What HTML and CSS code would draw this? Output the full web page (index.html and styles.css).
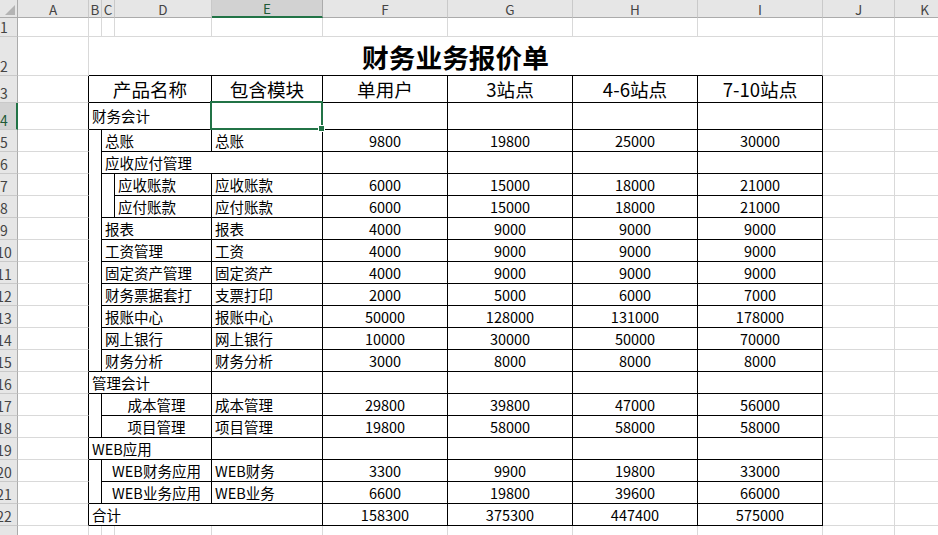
FILE: index.html
```html
<!DOCTYPE html>
<html lang="zh-CN">
<head>
<meta charset="utf-8">
<title>财务业务报价单</title>
<link rel="stylesheet" href="styles.css">
</head>
<body>
<div class="sheet">
  <!-- column headers -->
  <div class="corner"><span class="tri"></span></div>
  <div class="ch">A</div><div class="ch">B</div><div class="ch">C</div><div class="ch">D</div>
  <div class="ch csel">E</div><div class="ch">F</div><div class="ch">G</div><div class="ch">H</div>
  <div class="ch">I</div><div class="ch">J</div><div class="ch">K</div>

  <!-- row 1 -->
  <div class="rh"><span>1</span></div>
  <div class="c"></div><div class="c"></div><div class="c"></div><div class="c"></div><div class="c"></div>
  <div class="c"></div><div class="c"></div><div class="c"></div><div class="c"></div><div class="c"></div><div class="c"></div>

  <!-- row 2 -->
  <div class="rh"><span>2</span></div>
  <div class="c"></div>
  <div class="c s8 title">财务业务报价单</div>
  <div class="c"></div><div class="c"></div>

  <!-- row 3 -->
  <div class="rh"><span>3</span></div>
  <div class="c ar"></div>
  <div class="c bk s3 hd">产品名称</div>
  <div class="c bk hd">包含模块</div>
  <div class="c bk hd">单用户</div>
  <div class="c bk hd">3站点</div>
  <div class="c bk hd">4-6站点</div>
  <div class="c bk hd">7-10站点</div>
  <div class="c"></div><div class="c"></div>

  <!-- row 4 -->
  <div class="rh rsel"><span>4</span></div>
  <div class="c ar"></div>
  <div class="c bk s3 tx">财务会计</div>
  <div class="c bk sel"><span class="selbox"><span class="handle"></span></span></div>
  <div class="c bk"></div><div class="c bk"></div><div class="c bk"></div><div class="c bk"></div>
  <div class="c"></div><div class="c"></div>

  <!-- row 5 -->
  <div class="rh"><span>5</span></div>
  <div class="c ar"></div>
  <div class="c bk r11"></div>
  <div class="c bk s2 tx">总账</div>
  <div class="c bk tx">总账</div>
  <div class="c bk n">9800</div><div class="c bk n">19800</div><div class="c bk n">25000</div><div class="c bk n">30000</div>
  <div class="c"></div><div class="c"></div>

  <!-- row 6 -->
  <div class="rh"><span>6</span></div>
  <div class="c ar"></div>
  <div class="c bk s3 tx">应收应付管理</div>
  <div class="c bk"></div><div class="c bk"></div><div class="c bk"></div><div class="c bk"></div>
  <div class="c"></div><div class="c"></div>

  <!-- row 7 -->
  <div class="rh"><span>7</span></div>
  <div class="c ar"></div>
  <div class="c bk r2"></div>
  <div class="c bk tx">应收账款</div>
  <div class="c bk tx">应收账款</div>
  <div class="c bk n">6000</div><div class="c bk n">15000</div><div class="c bk n">18000</div><div class="c bk n">21000</div>
  <div class="c"></div><div class="c"></div>

  <!-- row 8 -->
  <div class="rh"><span>8</span></div>
  <div class="c ar"></div>
  <div class="c bk tx">应付账款</div>
  <div class="c bk tx">应付账款</div>
  <div class="c bk n">6000</div><div class="c bk n">15000</div><div class="c bk n">18000</div><div class="c bk n">21000</div>
  <div class="c"></div><div class="c"></div>

  <!-- row 9 -->
  <div class="rh"><span>9</span></div>
  <div class="c ar"></div>
  <div class="c bk s2 tx">报表</div>
  <div class="c bk tx">报表</div>
  <div class="c bk n">4000</div><div class="c bk n">9000</div><div class="c bk n">9000</div><div class="c bk n">9000</div>
  <div class="c"></div><div class="c"></div>

  <!-- row 10 -->
  <div class="rh"><span>10</span></div>
  <div class="c ar"></div>
  <div class="c bk s2 tx">工资管理</div>
  <div class="c bk tx">工资</div>
  <div class="c bk n">4000</div><div class="c bk n">9000</div><div class="c bk n">9000</div><div class="c bk n">9000</div>
  <div class="c"></div><div class="c"></div>

  <!-- row 11 -->
  <div class="rh"><span>11</span></div>
  <div class="c ar"></div>
  <div class="c bk s2 tx">固定资产管理</div>
  <div class="c bk tx">固定资产</div>
  <div class="c bk n">4000</div><div class="c bk n">9000</div><div class="c bk n">9000</div><div class="c bk n">9000</div>
  <div class="c"></div><div class="c"></div>

  <!-- row 12 -->
  <div class="rh"><span>12</span></div>
  <div class="c ar"></div>
  <div class="c bk s2 tx">财务票据套打</div>
  <div class="c bk tx">支票打印</div>
  <div class="c bk n">2000</div><div class="c bk n">5000</div><div class="c bk n">6000</div><div class="c bk n">7000</div>
  <div class="c"></div><div class="c"></div>

  <!-- row 13 -->
  <div class="rh"><span>13</span></div>
  <div class="c ar"></div>
  <div class="c bk s2 tx">报账中心</div>
  <div class="c bk tx">报账中心</div>
  <div class="c bk n">50000</div><div class="c bk n">128000</div><div class="c bk n">131000</div><div class="c bk n">178000</div>
  <div class="c"></div><div class="c"></div>

  <!-- row 14 -->
  <div class="rh"><span>14</span></div>
  <div class="c ar"></div>
  <div class="c bk s2 tx">网上银行</div>
  <div class="c bk tx">网上银行</div>
  <div class="c bk n">10000</div><div class="c bk n">30000</div><div class="c bk n">50000</div><div class="c bk n">70000</div>
  <div class="c"></div><div class="c"></div>

  <!-- row 15 -->
  <div class="rh"><span>15</span></div>
  <div class="c ar"></div>
  <div class="c bk s2 tx">财务分析</div>
  <div class="c bk tx">财务分析</div>
  <div class="c bk n">3000</div><div class="c bk n">8000</div><div class="c bk n">8000</div><div class="c bk n">8000</div>
  <div class="c"></div><div class="c"></div>

  <!-- row 16 -->
  <div class="rh"><span>16</span></div>
  <div class="c ar"></div>
  <div class="c bk s3 tx">管理会计</div>
  <div class="c bk"></div>
  <div class="c bk"></div><div class="c bk"></div><div class="c bk"></div><div class="c bk"></div>
  <div class="c"></div><div class="c"></div>

  <!-- row 17 -->
  <div class="rh"><span>17</span></div>
  <div class="c ar"></div>
  <div class="c bk r2"></div>
  <div class="c bk s2 ctr">成本管理</div>
  <div class="c bk tx">成本管理</div>
  <div class="c bk n">29800</div><div class="c bk n">39800</div><div class="c bk n">47000</div><div class="c bk n">56000</div>
  <div class="c"></div><div class="c"></div>

  <!-- row 18 -->
  <div class="rh"><span>18</span></div>
  <div class="c ar"></div>
  <div class="c bk s2 ctr">项目管理</div>
  <div class="c bk tx">项目管理</div>
  <div class="c bk n">19800</div><div class="c bk n">58000</div><div class="c bk n">58000</div><div class="c bk n">58000</div>
  <div class="c"></div><div class="c"></div>

  <!-- row 19 -->
  <div class="rh"><span>19</span></div>
  <div class="c ar"></div>
  <div class="c bk s3 tx">WEB应用</div>
  <div class="c bk"></div>
  <div class="c bk"></div><div class="c bk"></div><div class="c bk"></div><div class="c bk"></div>
  <div class="c"></div><div class="c"></div>

  <!-- row 20 -->
  <div class="rh"><span>20</span></div>
  <div class="c ar"></div>
  <div class="c bk r2"></div>
  <div class="c bk s2 ctr">WEB财务应用</div>
  <div class="c bk tx">WEB财务</div>
  <div class="c bk n">3300</div><div class="c bk n">9900</div><div class="c bk n">19800</div><div class="c bk n">33000</div>
  <div class="c"></div><div class="c"></div>

  <!-- row 21 -->
  <div class="rh"><span>21</span></div>
  <div class="c ar"></div>
  <div class="c bk s2 ctr">WEB业务应用</div>
  <div class="c bk tx">WEB业务</div>
  <div class="c bk n">6600</div><div class="c bk n">19800</div><div class="c bk n">39600</div><div class="c bk n">66000</div>
  <div class="c"></div><div class="c"></div>

  <!-- row 22 -->
  <div class="rh"><span>22</span></div>
  <div class="c ar"></div>
  <div class="c bk s4 tx">合计</div>
  <div class="c bk n">158300</div><div class="c bk n">375300</div><div class="c bk n">447400</div><div class="c bk n">575000</div>
  <div class="c"></div><div class="c"></div>

  <!-- row 23 -->
  <div class="rh"><span>23</span></div>
  <div class="c"></div><div class="c"></div><div class="c"></div><div class="c"></div><div class="c"></div>
  <div class="c"></div><div class="c"></div><div class="c"></div><div class="c"></div><div class="c"></div><div class="c"></div>
</div>
</body>
</html>
```

FILE: styles.css
```css
html, body {
  margin: 0;
  padding: 0;
  background: #ffffff;
  overflow: hidden;
}

.sheet {
  display: grid;
  grid-template-columns: 18px 71px 13px 13px 97px 111px 125px 125px 125px 125px 72px 60px;
  grid-template-rows: 18px 19px 39px 27px 27px repeat(18, 22px) 30px;
  width: 955px;
  font-family: "Noto Sans CJK SC", "Noto Sans", sans-serif;
  font-size: 14.5px;
  color: #000;
}

.sheet > div {
  box-sizing: border-box;
  min-width: 0;
  overflow: hidden;
}

/* header corner */
.corner {
  background: #e6e6e6;
  border-right: 1px solid #ababab;
  border-bottom: 1px solid #ababab;
  display: flex;
  align-items: flex-end;
  justify-content: flex-end;
  padding: 0 2px 2px 0;
}
.tri {
  width: 0;
  height: 0;
  border-left: 10px solid transparent;
  border-bottom: 10px solid #b4b4b4;
}

/* column headers */
.sheet > .ch {
  background: #e6e6e6;
  border-right: 1px solid #c9c9c9;
  border-bottom: 1px solid #ababab;
  color: #444;
  font-size: 13.5px;
  line-height: 14px;
  display: flex;
  align-items: center;
  justify-content: center;
  overflow: visible;
}
.sheet > .ch.csel {
  background: #d2d2d2;
  color: #1e5a37;
  border-bottom: 2px solid #217346;
  border-right-color: #ababab;
}

/* row headers */
.rh {
  grid-column: 1;
  background: #e6e6e6;
  border-right: 1px solid #ababab;
  border-bottom: 1px solid #c9c9c9;
  color: #444;
  font-size: 14px;
  display: flex;
  align-items: flex-end;
  padding-bottom: 1px;
}
.rh span {
  flex: none;
  width: 26px;
  margin-left: -9px;
  text-align: center;
  line-height: 16px;
}
.rh.rsel {
  background: #d2d2d2;
  color: #1e5a37;
  border-right: 2px solid #217346;
}

/* cells */
.c {
  border-right: 1px solid #d9d9d9;
  border-bottom: 1px solid #d9d9d9;
  display: flex;
  align-items: center;
  white-space: nowrap;
  line-height: 18px;
}
.c.ar { border-right-color: #000; }
.c.bk { border-right-color: #000; border-bottom-color: #000; }

.s2 { grid-column: span 2; }
.s3 { grid-column: span 3; }
.s4 { grid-column: span 4; }
.s8 { grid-column: span 8; }
.r2 { grid-row: span 2; }
.r11 { grid-row: span 11; }

.title {
  border-right-color: #d9d9d9;
  border-bottom-color: #000;
  justify-content: center;
  font-size: 26.7px;
  font-weight: 700;
  line-height: 32px;
  padding-top: 2px;
}

.hd {
  justify-content: center;
  font-size: 18.6px;
  line-height: 22px;
}

.tx {
  padding-left: 3px;
}

.ctr {
  justify-content: center;
}

.n {
  justify-content: center;
}

/* selected cell */
.sheet > .sel {
  position: relative;
  overflow: visible;
}
.selbox {
  position: absolute;
  left: -2px;
  top: -2px;
  right: -1px;
  bottom: -1px;
  border: 2px solid #217346;
}
.handle {
  position: absolute;
  right: -4px;
  bottom: -4px;
  width: 5px;
  height: 5px;
  background: #217346;
  border: 1px solid #fff;
}
```
